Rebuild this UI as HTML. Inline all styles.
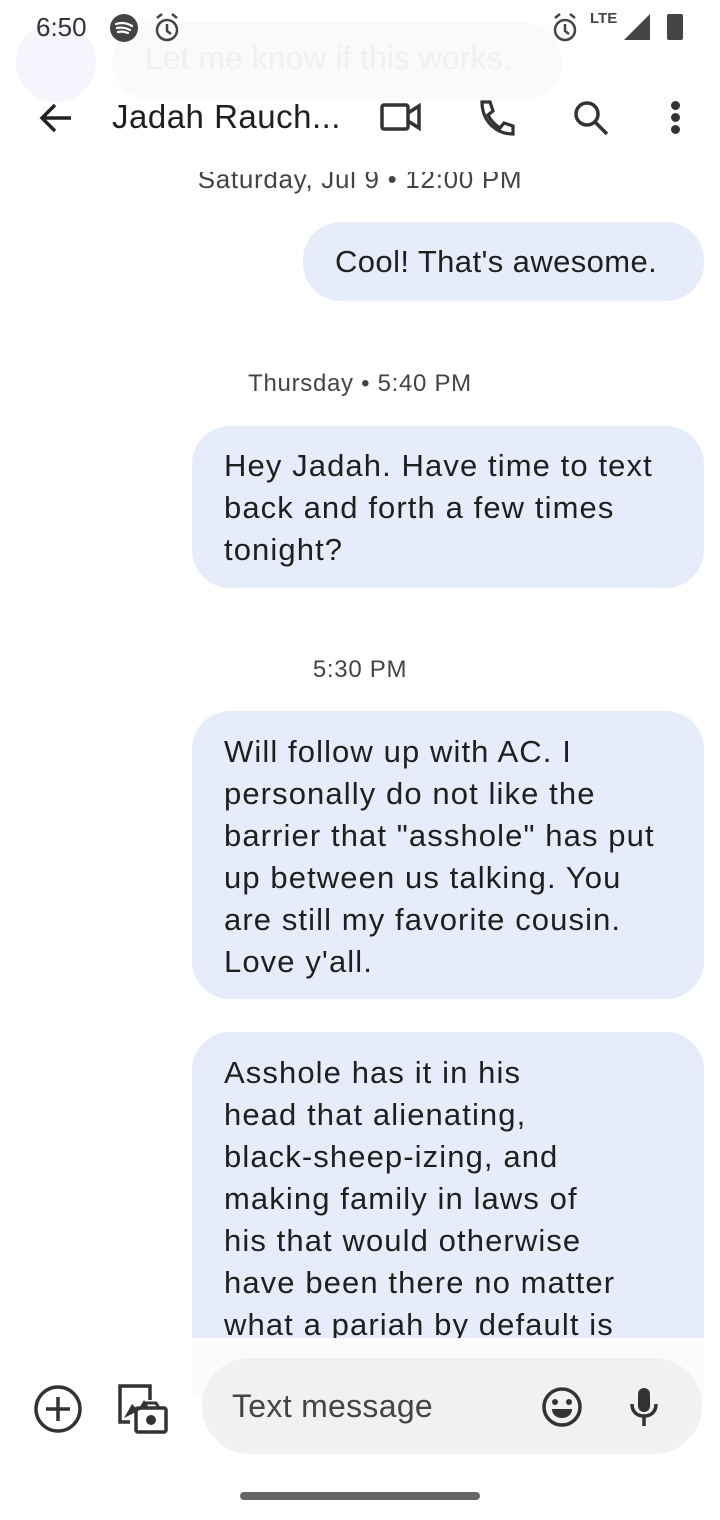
<!DOCTYPE html>
<html><head><style>
*{margin:0;padding:0;box-sizing:border-box}
body{width:720px;height:1520px;background:#fff;font-family:"Liberation Sans",sans-serif;color:#1f1f1f;position:relative;overflow:hidden}
.abs{position:absolute}
.bub{position:absolute;background:#e6ecf9;border-radius:38px;font-size:31px;letter-spacing:1.1px;line-height:42px;padding:0 32px;color:#1f1f1f;white-space:nowrap}
.ts{position:absolute;width:720px;text-align:center;font-size:24px;letter-spacing:0.7px;color:#444}
</style></head><body>
<div class="abs" style="left:0;top:150px;width:720px;height:1188px;overflow:hidden">
<div class="ts" style="top:14px;font-size:26px">Saturday, Jul 9 • 12:00 PM</div>
<div class="bub" style="left:303px;top:72px;width:401px;height:79px;line-height:79px;padding-left:32px;letter-spacing:0.4px">Cool! That's awesome.</div>
<div class="ts" style="top:220px">Thursday • 5:40 PM</div>
<div class="bub" style="left:192px;top:276px;width:512px;height:162px;padding-top:19px">Hey Jadah. Have time to text<br>back and forth a few times<br>tonight?</div>
<div class="ts" style="top:506px">5:30 PM</div>
<div class="bub" style="left:192px;top:561px;width:512px;height:288px;padding-top:20px">Will follow up with AC. I<br>personally do not like the<br>barrier that "asshole" has put<br>up between us talking. You<br>are still my favorite cousin.<br>Love y'all.</div>
<div class="bub" style="left:192px;top:882px;width:512px;height:400px;padding-top:20px">Asshole has it in his<br>head that alienating,<br>black-sheep-izing, and<br>making family in laws of<br>his that would otherwise<br>have been there no matter<br>what a pariah by default is</div>
</div>
<div class="abs" style="left:0;top:0;width:720px;height:172px;background:#fff"></div>
<div class="abs" style="left:16px;top:22px;width:80px;height:80px;border-radius:50%;background:#f6f4fc"></div>
<div class="abs" style="left:112px;top:22px;width:450px;height:78px;border-radius:40px;background:#fafafa"></div>
<div class="abs" style="left:145px;top:40px;font-size:32px;color:#f0f0f0">Let me know if this works.</div>
<div class="abs" style="left:36px;top:12px;font-size:26px;color:#333">6:50</div>
<svg class="abs" style="left:110px;top:14px" width="28" height="28" viewBox="0 0 28 28"><circle cx="14" cy="14" r="14" fill="#444"/><path d="M6 10c6-2 11-1 16 2M7 14c5-1 9 0 13 2M8 18c4-1 7 0 10 1" stroke="#fff" stroke-width="2.2" fill="none" stroke-linecap="round"/></svg>
<svg class="abs" style="left:152px;top:12px" width="30" height="32" viewBox="0 0 30 32"><circle cx="15" cy="18" r="10" fill="none" stroke="#444" stroke-width="2.5"/><path d="M15 12v7l4 3M5 6l5-4M25 6l-5-4" stroke="#444" stroke-width="2.5" fill="none"/></svg>
<svg class="abs" style="left:550px;top:12px" width="30" height="32" viewBox="0 0 30 32"><circle cx="15" cy="18" r="10" fill="none" stroke="#444" stroke-width="2.5"/><path d="M15 12v7l4 3M5 6l5-4M25 6l-5-4" stroke="#444" stroke-width="2.5" fill="none"/></svg>
<div class="abs" style="left:590px;top:10px;font-size:15px;font-weight:bold;color:#444">LTE</div>
<svg class="abs" style="left:624px;top:14px" width="26" height="26"><path d="M26 0V26H0Z" fill="#444"/></svg>
<div class="abs" style="left:667px;top:14px;width:16px;height:26px;background:#444;border-radius:2px"></div>
<svg class="abs" style="left:38px;top:100px" width="36" height="36" viewBox="0 0 36 36"><path d="M33 18H5M17 5L4 18l13 13" stroke="#222" stroke-width="3.5" fill="none"/></svg>
<div class="abs" style="left:112px;top:98px;font-size:33px;letter-spacing:0.5px;color:#1f1f1f">Jadah Rauch...</div>
<svg class="abs" style="left:380px;top:102px" width="42" height="30" viewBox="0 0 42 30"><rect x="2" y="3" width="26" height="24" rx="2" fill="none" stroke="#333" stroke-width="3.5"/><path d="M28 11l11-7v22l-11-7" fill="none" stroke="#333" stroke-width="3.5"/></svg>
<svg class="abs" style="left:476px;top:98px" width="40" height="40" viewBox="0 0 40 40"><path d="M6 4h8l3 9-5 4c3 6 7 10 12 13l4-5 9 3v8c-18 0-31-14-31-32z" fill="none" stroke="#333" stroke-width="3.2"/></svg>
<svg class="abs" style="left:572px;top:100px" width="40" height="36" viewBox="0 0 40 36"><circle cx="15" cy="14" r="11" fill="none" stroke="#333" stroke-width="3.5"/><path d="M23 22l12 12" stroke="#333" stroke-width="3.5"/></svg>
<div class="abs" style="left:671px;top:101px;width:9px;height:9px;border-radius:50%;background:#333"></div>
<div class="abs" style="left:671px;top:113px;width:9px;height:9px;border-radius:50%;background:#333"></div>
<div class="abs" style="left:671px;top:125px;width:9px;height:9px;border-radius:50%;background:#333"></div>
<div class="abs" style="left:192px;top:1338px;width:512px;height:60px;background:#fbfbfb"></div>
<svg class="abs" style="left:33px;top:1384px" width="50" height="50" viewBox="0 0 50 50"><circle cx="25" cy="25" r="22" fill="none" stroke="#333" stroke-width="3.5"/><path d="M25 13v24M13 25h24" stroke="#333" stroke-width="3.5"/></svg>
<svg class="abs" style="left:116px;top:1382px" width="52" height="52" viewBox="0 0 52 52"><path d="M14 40H4V4h30v14" fill="none" stroke="#333" stroke-width="3.5"/><path d="M8 36l8-14 6 6 6-10 4 6" fill="#333"/><rect x="20" y="26" width="30" height="24" rx="2" fill="none" stroke="#333" stroke-width="3.5"/><circle cx="35" cy="38" r="5" fill="#333"/><path d="M27 26l3-5h10l3 5" fill="none" stroke="#333" stroke-width="3"/></svg>
<div class="abs" style="left:202px;top:1358px;width:500px;height:96px;border-radius:48px;background:#f1f1f1"></div>
<div class="abs" style="left:232px;top:1388px;font-size:32px;letter-spacing:0.3px;color:#444">Text message</div>
<svg class="abs" style="left:540px;top:1385px" width="44" height="44" viewBox="0 0 44 44"><circle cx="22" cy="22" r="18" fill="none" stroke="#333" stroke-width="3.5"/><circle cx="15" cy="17" r="3" fill="#333"/><circle cx="29" cy="17" r="3" fill="#333"/><path d="M12 24h20c0 6-5 9-10 9s-10-3-10-9z" fill="#333"/></svg>
<svg class="abs" style="left:628px;top:1386px" width="32" height="42" viewBox="0 0 32 42"><rect x="10" y="2" width="12" height="24" rx="6" fill="#333"/><path d="M4 18c0 8 5 12 12 12s12-4 12-12M16 30v10" fill="none" stroke="#333" stroke-width="3.5"/></svg>
<div class="abs" style="left:240px;top:1492px;width:240px;height:8px;border-radius:4px;background:#666"></div>
</body></html>
